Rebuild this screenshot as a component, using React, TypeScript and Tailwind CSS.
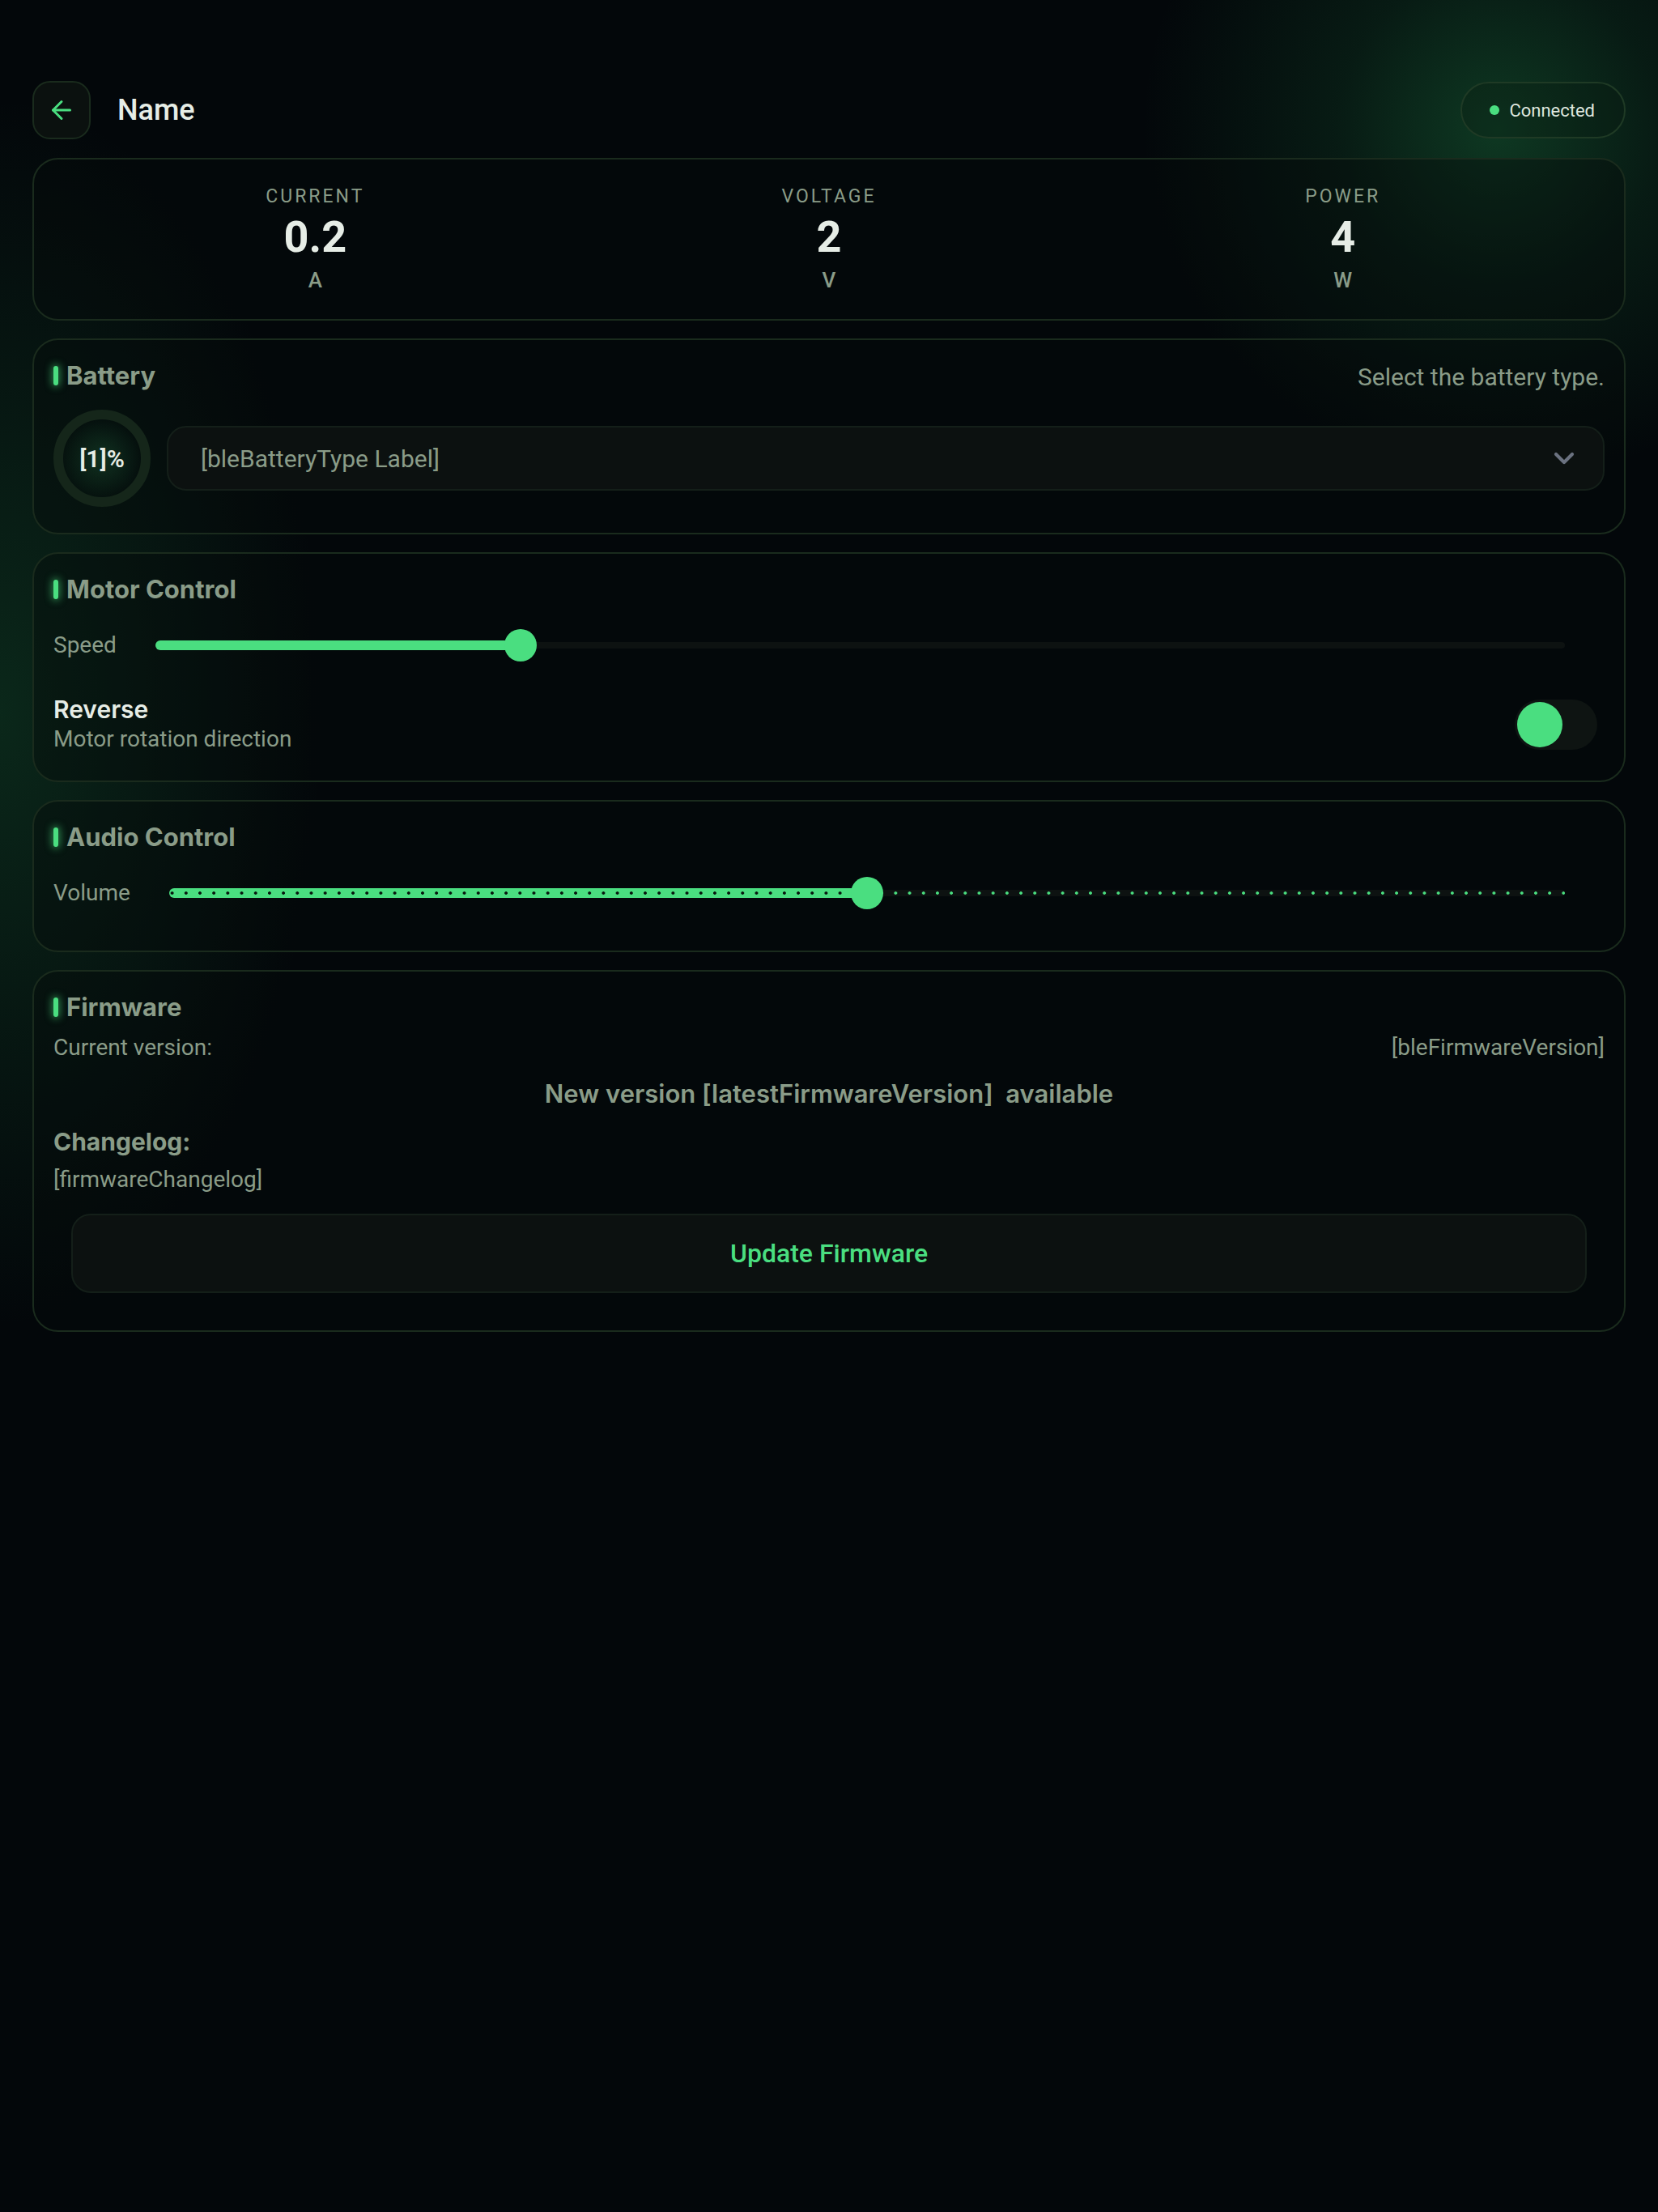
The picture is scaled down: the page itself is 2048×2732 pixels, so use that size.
import { ArrowLeft, ChevronDown } from "lucide-react";

const card =
  "rounded-[32px] border-2 border-[#1a2b1d] bg-[#050a0b]/40 p-[24px]";
const heading = "font-['Inter','Roboto',sans-serif]";

function SectionTitle({ title, right }: { title: string; right?: string }) {
  return (
    <div className="flex h-[40px] items-center justify-between">
      <div className="flex items-center gap-[10px]">
        <span className="h-[24px] w-[6px] rounded-full bg-[#4ade80] shadow-[0_0_10px_2px_rgba(74,222,128,0.55)]" />
        <h2 className={`${heading} text-[31px] font-bold leading-[40px] text-[#8a9c88]`}>
          {title}
        </h2>
      </div>
      {right && (
        <span className="pt-[4px] text-[30px] leading-[40px] text-[#8a9c88]">
          {right}
        </span>
      )}
    </div>
  );
}

function Stat({ label, value, unit }: { label: string; value: string; unit: string }) {
  return (
    <div className="flex flex-col items-center">
      <span className="text-[23px] leading-[32px] tracking-[3px] text-[#8a9c88]">
        {label}
      </span>
      <span className="mt-[4px] text-[54px] font-bold leading-[60px] text-[#e6ede6]">
        {value}
      </span>
      <span className="mt-[5px] text-[26px] font-medium leading-[36px] text-[#8a9c88]">
        {unit}
      </span>
    </div>
  );
}

function Slider({ label, value, dotted }: { label: string; value: number; dotted?: boolean }) {
  return (
    <div className="flex h-[40px] items-center gap-[48px] pr-[49px]">
      <span className="text-[28px] leading-[40px] text-[#8a9c88]">{label}</span>
      <div
        className={
          dotted
            ? "relative h-[8px] flex-1 rounded-full bg-[#0d1211] bg-[radial-gradient(circle,#4ade80_1.5px,transparent_2.2px)] bg-[length:17.2px_8px] bg-[position:-5px_0]"
            : "relative h-[8px] flex-1 rounded-full bg-[#0d1211]"
        }
      >
        <div
          className={
            dotted
              ? "absolute left-0 top-1/2 h-[12px] -translate-y-1/2 rounded-full bg-[#4ade80] bg-[radial-gradient(circle,#07150d_1.5px,transparent_2.2px)] bg-[length:17.2px_12px] bg-[position:-5px_0]"
              : "absolute left-0 top-1/2 h-[12px] -translate-y-1/2 rounded-full bg-[#4ade80]"
          }
          style={{ width: `${value}%` }}
        />
        <div
          className="absolute top-1/2 h-[40px] w-[40px] -translate-x-1/2 -translate-y-1/2 rounded-full bg-[#4ade80]"
          style={{ left: `${value}%` }}
        />
      </div>
    </div>
  );
}

export default function App() {
  return (
    <div className="min-h-[2732px] w-full bg-[#03070a] bg-[radial-gradient(circle_at_1850px_160px,rgba(40,170,90,0.3),rgba(40,170,90,0.12)_200px,transparent_440px),radial-gradient(400px_760px_at_0px_880px,rgba(40,170,90,0.2),transparent)] px-[40px] pt-[100px] font-['Roboto','Noto_Sans',sans-serif]">
      <header className="flex h-[72px] items-center justify-between">
        <div className="flex items-center gap-[33px]">
          <button className="flex h-[72px] w-[72px] items-center justify-center rounded-[22px] border-2 border-[#1a2b1d] bg-[#0b110f]">
            <ArrowLeft size={36} color="#4ade80" strokeWidth={2} />
          </button>
          <h1 className="text-[36px] font-medium text-[#e6ede6]">Name</h1>
        </div>
        <div className="flex h-[70px] items-center gap-[12px] rounded-full border-2 border-[#1f3a25] bg-[#0a1a12]/30 pl-[34px] pr-[36px]">
          <span className="h-[12px] w-[12px] rounded-full bg-[#4ade80]" />
          <span className="text-[22px] text-[#dfe7df]">Connected</span>
        </div>
      </header>

      <div className="mt-[23px] flex flex-col gap-[22px]">
        <section className="grid grid-cols-3 rounded-[32px] border-2 border-[#1a2b1d] bg-[#050a0b]/40 px-[30px] py-[30px]">
          <Stat label="CURRENT" value="0.2" unit="A" />
          <Stat label="VOLTAGE" value="2" unit="V" />
          <Stat label="POWER" value="4" unit="W" />
        </section>

        <section className={card}>
          <SectionTitle title="Battery" right="Select the battery type." />
          <div className="mb-[8px] mt-[22px] flex items-center gap-[20px]">
            <div className="flex h-[120px] w-[120px] shrink-0 items-center justify-center rounded-full border-[12px] border-[#15261a] bg-[radial-gradient(circle,rgba(74,222,128,0.16),transparent_70%)]">
              <span className="text-[30px] font-semibold text-[#e6ede6]">[1]%</span>
            </div>
            <div className="flex h-[80px] flex-1 items-center justify-between rounded-[24px] border-2 border-[#141f19] bg-[#0c1110] pl-[40px] pr-[28px]">
              <span className="text-[30px] text-[#8a9c88]">[bleBatteryType Label]</span>
              <ChevronDown size={40} color="#6b7280" strokeWidth={2.5} />
            </div>
          </div>
        </section>

        <section className={card}>
          <SectionTitle title="Motor Control" />
          <div className="mt-[29px]">
            <Slider label="Speed" value={25.9} />
          </div>
          <div className="mb-[8px] mt-[41px] flex items-center justify-between">
            <div className="flex flex-col">
              <span className={`${heading} text-[30px] font-semibold leading-[36px] text-[#e6ede6]`}>
                Reverse
              </span>
              <span className="text-[28px] leading-[38px] text-[#8a9c88]">Motor rotation direction</span>
            </div>
            <div className="mr-[9px] flex h-[62px] w-[102px] items-center rounded-full bg-[#0e1412] px-[3px]">
              <span className="h-[56px] w-[56px] rounded-full bg-[#4ade80]" />
            </div>
          </div>
        </section>

        <section className={card}>
          <SectionTitle title="Audio Control" />
          <div className="mb-[27px] mt-[29px]">
            <Slider label="Volume" value={50} dotted />
          </div>
        </section>

        <section className={card}>
          <SectionTitle title="Firmware" />
          <div className="mt-[10px] flex justify-between text-[28px] leading-[40px] text-[#8a9c88]">
            <span>Current version:</span>
            <span>[bleFirmwareVersion]</span>
          </div>
          <p className={`${heading} mt-[15px] text-center text-[31px] font-semibold leading-[44px] text-[#8a9c88]`}>
            New version [latestFirmwareVersion]&nbsp; available
          </p>
          <h3 className={`${heading} mt-[15px] text-[30px] font-bold leading-[44px] text-[#8a9c88]`}>
            Changelog:
          </h3>
          <p className="mt-[5px] text-[28px] leading-[40px] text-[#8a9c88]">
            [firmwareChangelog]
          </p>
          <button className="mx-[22px] mb-[22px] mt-[22px] flex h-[98px] w-[calc(100%-44px)] items-center justify-center rounded-[24px] border-2 border-[#141f19] bg-[#0c1110] text-[32px] font-medium text-[#4ade80]">
            Update Firmware
          </button>
        </section>
      </div>
    </div>
  );
}
